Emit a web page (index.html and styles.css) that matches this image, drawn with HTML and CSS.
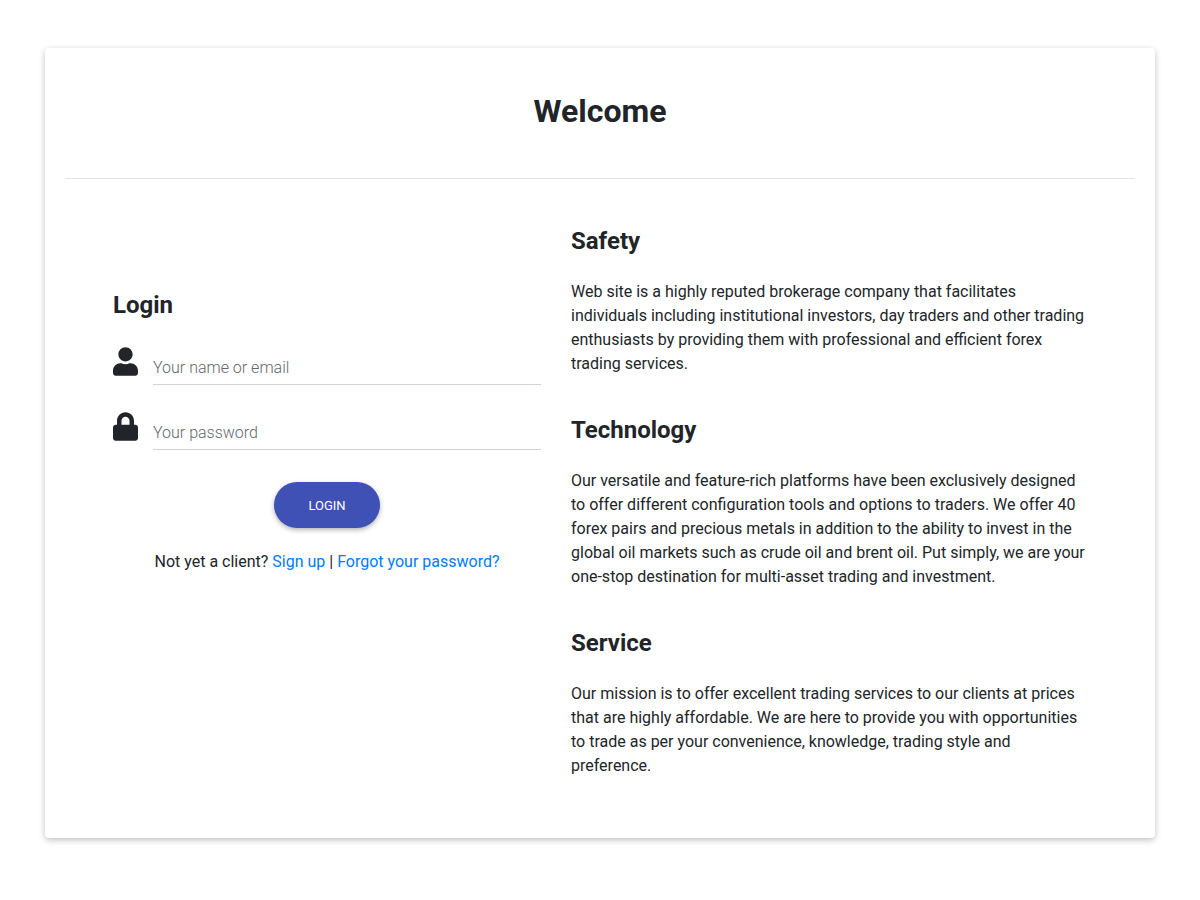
FILE: index.html
```html
<!DOCTYPE html>
<html>
<head>
	<meta charset="utf-8">
	<title>Welcome</title>
	<link rel="stylesheet" href="styles.css">
</head>
<body>
	<div class="card">
		<h1 class="title">Welcome</h1>
		<hr class="divider">
		<div class="columns">
			<div class="login">
				<h2 class="heading">Login</h2>
				<div class="field">
					<svg class="field-icon" viewBox="0 0 448 512"><path d="M224 256c70.7 0 128-57.3 128-128S294.7 0 224 0 96 57.3 96 128s57.3 128 128 128zm89.6 32h-16.7c-22.2 10.2-46.9 16-72.9 16s-50.6-5.8-72.9-16h-16.7C60.2 288 0 348.2 0 422.4V464c0 26.5 21.5 48 48 48h352c26.5 0 48-21.5 48-48v-41.6c0-74.2-60.2-134.4-134.4-134.4z"/></svg>
					<input class="field-input" type="text" placeholder="Your name or email">
				</div>
				<div class="field">
					<svg class="field-icon" viewBox="0 0 448 512"><path d="M400 224h-24v-72C376 68.2 307.8 0 224 0S72 68.2 72 152v72H48c-26.5 0-48 21.5-48 48v192c0 26.5 21.5 48 48 48h352c26.5 0 48-21.5 48-48V272c0-26.5-21.5-48-48-48zm-104 0H152v-72c0-39.7 32.3-72 72-72s72 32.3 72 72v72z"/></svg>
					<input class="field-input" type="password" placeholder="Your password">
				</div>
				<div class="actions">
					<button class="login-btn" type="button">Login</button>
					<p class="login-links">Not yet a client? <a href="#">Sign up</a> | <a href="#">Forgot your password?</a></p>
				</div>
			</div>
			<div class="info">
				<section class="info-block">
					<h2 class="heading">Safety</h2>
					<p>Web site is a highly reputed brokerage company that facilitates individuals including institutional investors, day traders and other trading enthusiasts by providing them with professional and efficient forex trading services.</p>
				</section>
				<section class="info-block">
					<h2 class="heading">Technology</h2>
					<p>Our versatile and feature-rich platforms have been exclusively designed to offer different configuration tools and options to traders. We offer 40 forex pairs and precious metals in addition to the ability to invest in the global oil markets such as crude oil and brent oil. Put simply, we are your one-stop destination for multi-asset trading and investment.</p>
				</section>
				<section class="info-block">
					<h2 class="heading">Service</h2>
					<p>Our mission is to offer excellent trading services to our clients at prices that are highly affordable. We are here to provide you with opportunities to trade as per your convenience, knowledge, trading style and preference.</p>
				</section>
			</div>
		</div>
	</div>
</body>
</html>
```

FILE: styles.css
```css
* {
	box-sizing: border-box;
}

body {
	margin: 0;
	padding: 48px 45px;
	background: #fff;
	color: #212529;
	font-family: Roboto, "Liberation Sans", sans-serif;
	font-size: 16px;
	line-height: 24px;
}

.card {
	height: 790px;
	padding: 0 20px;
	background: #fff;
	border-radius: 4px;
	box-shadow: 0 2px 6px rgba(0, 0, 0, 0.25);
}

.title {
	margin: 0;
	padding-top: 44px;
	height: 130px;
	text-align: center;
	font-size: 32px;
	line-height: 38px;
	font-weight: 700;
}

.divider {
	margin: 0;
	border: 0;
	border-top: 1px solid #e3e3e3;
}

.columns {
	display: grid;
	grid-template-columns: 428px 1fr;
	column-gap: 30px;
	padding: 0 48px;
}

.heading {
	margin: 0;
	font-size: 24px;
	line-height: 29px;
	font-weight: 700;
}

.login {
	padding-top: 112px;
}

.field {
	display: flex;
	align-items: flex-start;
	gap: 15px;
	height: 65px;
}

.login .heading + .field {
	margin-top: 27px;
}

.field-icon {
	flex: none;
	width: 25px;
	height: 29px;
	fill: #212529;
}

.field-input {
	flex: 1;
	min-width: 0;
	height: 38px;
	padding: 4px 0 0;
	border: 0;
	border-bottom: 1px solid #ced4da;
	outline: none;
	font-family: inherit;
	font-size: 16px;
	font-weight: 300;
	color: #212529;
}

.field-input::placeholder {
	color: #5f676e;
	opacity: 1;
}

.actions {
	text-align: center;
	margin-top: 5px;
}

.login-btn {
	display: block;
	width: 106px;
	height: 46px;
	margin: 0 auto;
	border: 0;
	border-radius: 23px;
	background: #3f51b5;
	color: #fff;
	font-family: inherit;
	font-size: 13px;
	font-weight: 400;
	text-transform: uppercase;
	box-shadow: 0 2px 5px rgba(0, 0, 0, 0.3);
}

.login-links {
	margin: 22px 0 0;
	color: #212529;
}

.login-links a {
	color: #007bff;
	text-decoration: none;
}

.info {
	padding-top: 48px;
}

.info-block {
	margin-bottom: 40px;
}

.info-block p {
	margin: 24px 0 0;
	color: #212529;
}
```
